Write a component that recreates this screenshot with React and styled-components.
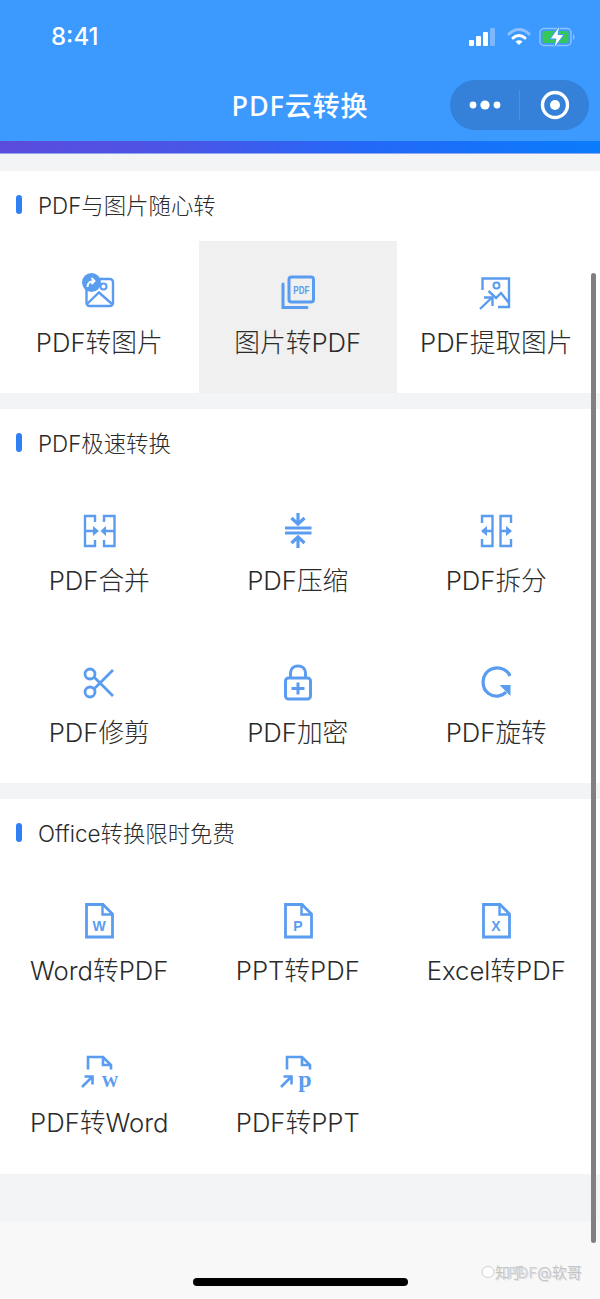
import React from "react";
import styled, { createGlobalStyle } from "styled-components";

const Global = createGlobalStyle`
  html, body { margin: 0; padding: 0; background: #f8f8f8; }
  * { box-sizing: border-box; }
  body { font-family: Inter, "Noto Sans CJK SC", sans-serif; }
`;
const Page = styled.div`
  position: relative;
  width: 600px;
  height: 1299px;
  overflow: hidden;
  background: #f8f8f8;
  display: flex;
  flex-direction: column;
`;
const Header = styled.header`
  height: 141px;
  background: #3c9aff;
  color: #fff;
  display: flex;
  flex-direction: column;
`;
const StatusBar = styled.div`
  height: 74px;
  display: flex;
  align-items: center;
  justify-content: space-between;
  padding: 0 23px 0 51px;
`;
const Time = styled.span`
  font: 500 24px/1 Inter, "Liberation Sans", sans-serif;
`;
const StatusIcons = styled.div`
  display: flex;
  align-items: center;
  gap: 10px;
`;
const NavBar = styled.div`
  position: relative;
  height: 67px;
  display: flex;
  align-items: flex-start;
  justify-content: flex-end;
  padding: 6px 11px 0 0;
`;
const NavTitle = styled.h1`
  position: absolute;
  left: 0;
  width: 600px;
  top: 16px;
  margin: 0;
  text-align: center;
  font: 500 27px/32px "Noto Sans", "Noto Sans CJK SC", sans-serif;
  letter-spacing: 0.9px;
`;
const Capsule = styled.div`
  width: 139px;
  height: 50px;
  border-radius: 25px;
  background: #3580d8;
  display: flex;
  align-items: center;
`;
const CapsuleHalf = styled.div`
  flex: 1;
  display: flex;
  align-items: center;
  justify-content: center;
`;
const CapsuleLine = styled.div`
  width: 1px;
  height: 30px;
  background: #4a90e0;
`;
const GradientBar = styled.div`
  height: 13px;
  background: linear-gradient(90deg, #5b4bdc 0%, #4a55e6 30%, #2468f8 60%, #0a7cfb 100%);
  border-bottom: 1px solid #8fa8f0;
`;
const Gap = styled.div`
  height: ${(p) => p.$h}px;
  background: #f3f4f6;
`;
const Section = styled.section`
  background: #fff;
  padding-bottom: ${(p) => p.$extra || 0}px;
`;
const SectionTitle = styled.div`
  height: 70px;
  display: flex;
  align-items: center;
  padding: 0 0 4px 16px;
  font-size: 22.4px;
  font-weight: 300;
  color: #2b2b2b;
`;
const Marker = styled.i`
  width: 6px;
  height: 19px;
  border-radius: 3px;
  background: #2f80f5;
  margin-right: 16px;
`;
const Grid = styled.div`
  display: grid;
  grid-template-columns: repeat(3, 198.5px);
`;
const Cell = styled.div`
  height: 152px;
  display: flex;
  flex-direction: column;
  align-items: center;
  padding-top: 30px;
  background: ${(p) => (p.$active ? "#f0f0f0" : "transparent")};
`;
const IconBox = styled.div`
  width: 42px;
  height: 42px;
  display: flex;
  align-items: center;
  justify-content: center;
`;
const Label = styled.div`
  margin-top: 11px;
  font-size: 25.7px;
  font-weight: 300;
  line-height: 38px;
  color: #2b2b2b;
  white-space: nowrap;
`;
const Scrollbar = styled.div`
  position: absolute;
  left: 591px;
  top: 273px;
  width: 5px;
  height: 970px;
  border-radius: 3px;
  background: #808080;
`;
const HomeBar = styled.div`
  position: absolute;
  left: 193px;
  top: 1278px;
  width: 215px;
  height: 8px;
  border-radius: 4px;
  background: #000;
`;
const Watermark = styled.div`
  position: absolute;
  left: 481px;
  top: 1261px;
  display: flex;
  align-items: center;
  font-size: 15px;
  line-height: 24px;
  color: #c4c4c4;
  text-shadow: 0 0 1px #fff, 1px 1px 0 #ddd;
  white-space: nowrap;
`;
const Overlap = styled.span`
  margin-left: -17px;
  color: #cfcfcf;
`;

const B = "#5a9cf0";
const Svg = ({ children }) => (
  <svg width={42} height={42} viewBox="0 0 42 42" fill="none" stroke={B} strokeWidth="2.4">{children}</svg>
);

const icons = {
  toImage: (
    <Svg>
      <rect x="8.5" y="8" width="26.5" height="27" rx="3" />
      <circle cx="25.5" cy="15.5" r="3" strokeWidth="2" />
      <path d="M9 33 L21 21.5 L34 33" />
      <circle cx="13.5" cy="11.5" r="9.5" fill={B} stroke="none" />
      <path d="M9.5 16 C9.5 11.5 12.5 10 16.5 10 M13.5 7 L16.5 10 L13.5 13" stroke="#fff" strokeWidth="1.9" />
    </Svg>
  ),
  toPdf: (
    <Svg>
      <path d="M6 13 V36.5 H30" strokeWidth="3" strokeLinecap="round" />
      <rect x="12" y="6" width="24.5" height="25" rx="2.5" strokeWidth="3" />
      <text x="24.3" y="23" textAnchor="middle" fill={B} stroke="none" fontFamily="Liberation Sans" fontWeight="700" fontSize="10.5" textLength="16" lengthAdjust="spacingAndGlyphs">PDF</text>
    </Svg>
  ),
  extract: (
    <Svg>
      <path d="M7.5 19 V7.5 H34 V36 H23" />
      <circle cx="21.5" cy="14.5" r="3" strokeWidth="2" />
      <path d="M13.5 20 L21 27 L26 22 L34 32" />
      <path d="M5 38 L17 26.5 M9 26.5 H17.5 V35" />
    </Svg>
  ),
  merge: (
    <Svg>
      <path d="M17 13 V7 H7 V37 H17 V31 M26 13 V7 H36.5 V37 H26 V31" />
      <path d="M7 22 H17 M26 22 H36" />
      <path d="M15 17 L21 22 L15 27 Z M28 17 L22.5 22 L28 27 Z" fill={B} stroke="none" />
    </Svg>
  ),
  compress: (
    <Svg>
      <path d="M8 19 H34.5 M8 24 H34.5" strokeWidth="2.8" />
      <path d="M21 4 V14 M21 29 V39" strokeWidth="3.2" />
      <path d="M14.5 9 L21 15 L27.5 9 M14.5 34 L21 28 L27.5 34" strokeWidth="3.2" />
    </Svg>
  ),
  split: (
    <Svg>
      <path d="M7 14 V7 H17.5 V37 H7 V30 M36 14 V7 H25.5 V37 H36 V30" />
      <path d="M7 22 H17 M26 22 H36" />
      <path d="M12 17 L6 22 L12 27 Z M31 17 L37 22 L31 27 Z" fill={B} stroke="none" />
    </Svg>
  ),
  cut: (
    <Svg>
      <circle cx="12" cy="13" r="5" strokeWidth="2.8" />
      <circle cx="12" cy="31" r="5" strokeWidth="2.8" />
      <path d="M16 16 L35 35 M16 28 L35 9" strokeWidth="2.8" />
    </Svg>
  ),
  lock: (
    <Svg>
      <rect x="8.5" y="17" width="25" height="21" rx="3" strokeWidth="3" />
      <path d="M13.5 17 V12 C13.5 2.5 28.5 2.5 28.5 12 V17" strokeWidth="3" />
      <path d="M14.5 27.5 H27.5 M21 21.5 V33.5" strokeWidth="3" />
    </Svg>
  ),
  rotate: (
    <Svg>
      <path d="M35 15 C31.5 7 22 5 15.5 8.5 C6 13.5 6 27 13.5 32.5 C19.5 37 27 35.5 31 31" strokeWidth="3.2" />
      <path d="M24.5 24 H35.5 V35 Z" fill={B} stroke="none" />
    </Svg>
  ),
  doc: (letter) => (
    <Svg>
      <path d="M8.5 5.5 H25 L34.5 15 V38 H8.5 Z" strokeWidth="2.8" />
      <path d="M24.5 5.5 V15.5 H34.5" strokeWidth="2.4" />
      <text x="21" y="32" textAnchor="middle" fill={B} stroke="none" fontFamily="Liberation Sans" fontWeight="700" fontSize="14">{letter}</text>
    </Svg>
  ),
  from: (letter, size, x) => (
    <Svg>
      <path d="M10 18.5 V6 H25 L33 14 V18.5 M25 6 V14 H33" strokeWidth="2.6" />
      <path d="M4 36 L14 26 M6.5 25.5 H14.5 V33.5" strokeWidth="2.6" />
      <text x={x} y="36" textAnchor="middle" fill={B} stroke="none" fontFamily="Liberation Serif" fontWeight="700" fontSize={size}>{letter}</text>
    </Svg>
  ),
};

const sections = [
  { gap: 17, title: "PDF与图片随心转", items: [
    ["PDF转图片", icons.toImage], ["图片转PDF", icons.toPdf, true], ["PDF提取图片", icons.extract],
  ]},
  { gap: 16, title: "PDF极速转换", items: [
    ["PDF合并", icons.merge], ["PDF压缩", icons.compress], ["PDF拆分", icons.split],
    ["PDF修剪", icons.cut], ["PDF加密", icons.lock], ["PDF旋转", icons.rotate],
  ]},
  { gap: 16, extra: 1, title: "Office转换限时免费", items: [
    ["Word转PDF", icons.doc("W")], ["PPT转PDF", icons.doc("P")], ["Excel转PDF", icons.doc("X")],
    ["PDF转Word", icons.from("W", 17, 32)], ["PDF转PPT", icons.from("p", 24, 28)],
  ]},
];

export default function App() {
  return (
    <Page>
      <Global />
      <Header>
        <StatusBar>
          <Time>8:41</Time>
          <StatusIcons>
            <svg width="28" height="20" viewBox="0 0 28 20" fill="#fff">
              <rect x="0" y="13" width="5" height="6" rx="1" />
              <rect x="7" y="9" width="5" height="10" rx="1" />
              <rect x="14" y="5" width="5" height="14" rx="1" />
              <rect x="21" y="1" width="5" height="18" rx="1" fill="#7db8ff" />
            </svg>
            <svg width="24" height="20" viewBox="0 0 24 20" fill="none" strokeLinecap="round">
              <path d="M2 7 C8 1 16 1 22 7" stroke="#8cc0ff" strokeWidth="3" />
              <path d="M6 11 C9.5 7.5 14.5 7.5 18 11" stroke="#fff" strokeWidth="3" />
              <path d="M12 18 L8.5 14.5 C10.5 12.8 13.5 12.8 15.5 14.5 Z" fill="#fff" />
            </svg>
            <svg width="38" height="24" viewBox="0 0 38 24" style={{ marginLeft: -2 }}>
              <rect x="1" y="3.5" width="31" height="17" rx="4" fill="none" stroke="#8cc0ff" strokeWidth="1.5" />
              <rect x="3.5" y="6" width="26" height="12" rx="2" fill="#35c759" />
              <path d="M34 9 C36 10 36 14 34 15 Z" fill="#8cc0ff" />
              <path d="M21 0 L11 14 H17 L14.5 24 L25 9.5 H19 Z" fill="#fff" stroke="#3c9aff" strokeWidth="1" />
            </svg>
          </StatusIcons>
        </StatusBar>
        <NavBar>
          <NavTitle>PDF云转换</NavTitle>
          <Capsule>
            <CapsuleHalf>
              <svg width="32" height="12" viewBox="0 0 32 12" fill="#fff">
                <circle cx="4" cy="6" r="3.4" /><circle cx="16" cy="6" r="4.6" /><circle cx="28" cy="6" r="3.4" />
              </svg>
            </CapsuleHalf>
            <CapsuleLine />
            <CapsuleHalf>
              <svg width="30" height="30" viewBox="0 0 30 30">
                <circle cx="15" cy="15" r="12.5" fill="none" stroke="#fff" strokeWidth="3.4" />
                <circle cx="15" cy="15" r="5" fill="#fff" />
              </svg>
            </CapsuleHalf>
          </Capsule>
        </NavBar>
      </Header>
      <GradientBar />
      {sections.map((s) => (
        <React.Fragment key={s.title}>
          <Gap $h={s.gap} />
          <Section $extra={s.extra}>
            <SectionTitle><Marker />{s.title}</SectionTitle>
            <Grid>
              {s.items.map(([label, icon, active]) => (
                <Cell key={label} $active={active}>
                  <IconBox>{icon}</IconBox>
                  <Label>{label}</Label>
                </Cell>
              ))}
            </Grid>
          </Section>
        </React.Fragment>
      ))}
      <Gap $h={48} />
      <Scrollbar />
      <HomeBar />
      <Watermark>
        <svg width="14" height="20" viewBox="0 0 14 20" fill="#fff" stroke="#cfcfcf" strokeWidth="1">
          <ellipse cx="7" cy="9" rx="6" ry="5.5" />
        </svg>
        知乎<Overlap>PDF</Overlap>@软哥
      </Watermark>
    </Page>
  );
}
